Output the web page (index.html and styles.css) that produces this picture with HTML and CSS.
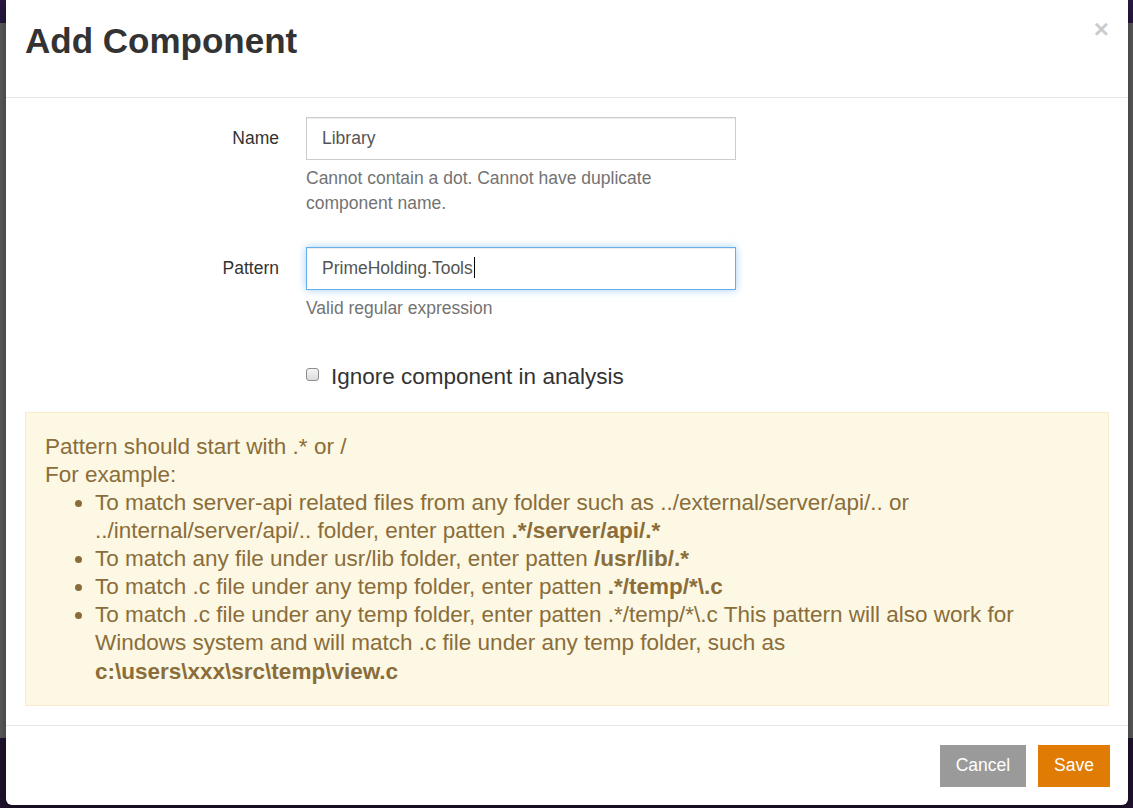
FILE: index.html
```html
<!DOCTYPE html>
<html lang="en">
<head>
<meta charset="utf-8">
<title>Add Component</title>
<link rel="stylesheet" href="styles.css">
</head>
<body>
<div class="modal">
  <div class="modal-header">
    <h4 class="modal-title">Add Component</h4>
    <button class="close" type="button" aria-label="Close">&times;</button>
  </div>
  <div class="modal-body">
    <form class="form">
      <div class="form-group">
        <label class="control-label">Name</label>
        <div class="field">
          <div class="form-control">Library</div>
          <p class="help">Cannot contain a dot. Cannot have duplicate component name.</p>
        </div>
      </div>
      <div class="form-group">
        <label class="control-label">Pattern</label>
        <div class="field">
          <div class="form-control focused">PrimeHolding.Tools<span class="caret"></span></div>
          <p class="help">Valid regular expression</p>
        </div>
      </div>
      <div class="form-group">
        <span></span>
        <div class="field checkbox-field">
          <label class="checkbox"><input type="checkbox" class="cb">Ignore component in analysis</label>
        </div>
      </div>
    </form>
    <div class="alert">
      <div>Pattern should start with .* or /</div>
      <div>For example:</div>
      <ul>
        <li>To match server-api related files from any folder such as ../external/server/api/.. or ../internal/server/api/.. folder, enter patten <b>.*/server/api/.*</b></li>
        <li>To match any file under usr/lib folder, enter patten <b>/usr/lib/.*</b></li>
        <li>To match .c file under any temp folder, enter patten <b>.*/temp/*\.c</b></li>
        <li>To match .c file under any temp folder, enter patten .*/temp/*\.c This pattern will also work for Windows system and will match .c file under any temp folder, such as <b class="path">c:\users\xxx\src\temp\view.c</b></li>
      </ul>
    </div>
  </div>
  <div class="modal-footer">
    <button type="button" class="btn btn-cancel">Cancel</button>
    <button type="button" class="btn btn-save">Save</button>
  </div>
</div>
</body>
</html>
```

FILE: styles.css
```css
html, body {
  margin: 0;
  height: 100%;
}

body {
  font-family: "Liberation Sans", Arial, sans-serif;
  background: linear-gradient(#2a1943 0 23px, #636363 23px 738px, #231532 738px);
  overflow: hidden;
}

.modal {
  margin-left: 6px;
  width: 1122px;
  background: #fff;
  border-radius: 0 0 6px 6px;
  box-shadow: 0 6px 18px rgba(0, 0, 0, 0.5);
}

.modal-header {
  display: flex;
  justify-content: space-between;
  align-items: flex-start;
  padding: 21px 19px 36px 19px;
  border-bottom: 1px solid #e5e5e5;
}

.modal-title {
  margin: 0;
  font-size: 35px;
  font-weight: bold;
  line-height: 40px;
  color: #333;
}

.close {
  background: none;
  border: 0;
  padding: 0;
  margin-top: -5px;
  font-family: "Liberation Sans", Arial, sans-serif;
  font-size: 26px;
  font-weight: bold;
  line-height: 1;
  color: #000;
  opacity: 0.2;
}

.modal-body {
  padding: 19px 19px 19px 19px;
}

.form {
  margin: 0;
}

.form-group {
  display: grid;
  grid-template-columns: 254px 430px;
  column-gap: 27px;
  margin-bottom: 18.75px;
}

.control-label {
  text-align: right;
  font-size: 17.5px;
  line-height: 42.5px;
  color: #333;
}

.form-control {
  box-sizing: border-box;
  height: 42.5px;
  border: 1px solid #ccc;
  padding: 7.5px 15px;
  font-size: 17.5px;
  line-height: 25px;
  color: #555;
  background: #fff;
  box-shadow: inset 0 1px 1px rgba(0, 0, 0, 0.075);
  white-space: nowrap;
}

.form-control.focused {
  border-color: #66afe9;
  box-shadow: inset 0 1px 1px rgba(0, 0, 0, 0.075), 0 0 8px rgba(102, 175, 233, 0.6);
}

.caret {
  display: inline-block;
  width: 1px;
  height: 21px;
  background: #000;
  vertical-align: -4px;
  margin-left: 1px;
}

.help {
  margin: 6.25px 0 12.5px;
  color: #737373;
  font-size: 17.5px;
  line-height: 25px;
}

.checkbox-field {
  padding-top: 8.75px;
}

.checkbox {
  display: flex;
  align-items: center;
  font-size: 22.5px;
  line-height: 32px;
  color: #333;
}

.cb {
  appearance: none;
  -webkit-appearance: none;
  box-sizing: border-box;
  width: 13px;
  height: 13px;
  margin: 0 12px 4px 0;
  border: 1px solid #8e8e8e;
  border-radius: 3px;
  background: linear-gradient(#f4f4f4, #dcdcdc);
}

.alert {
  background: #fcf8e3;
  border: 1px solid #faebcc;
  color: #8a6d3b;
  padding: 20px 19px 19px 19px;
  font-size: 22.5px;
  line-height: 28.125px;
}

.alert ul {
  margin: 0;
  padding-left: 50px;
}

.alert .path {
  display: inline-block;
}

.modal-footer {
  display: flex;
  justify-content: flex-end;
  gap: 12px;
  border-top: 1px solid #e5e5e5;
  padding: 19px 18px 18px 18px;
}

.btn {
  font-family: "Liberation Sans", Arial, sans-serif;
  font-size: 17.5px;
  line-height: 25px;
  padding: 7.5px 15px;
  border: 1px solid transparent;
  border-radius: 0;
  color: #fff;
}

.btn-cancel {
  background: #9a9a9a;
  border-color: #9a9a9a;
}

.btn-save {
  background: #e07b04;
  border-color: #e07b04;
}
```
